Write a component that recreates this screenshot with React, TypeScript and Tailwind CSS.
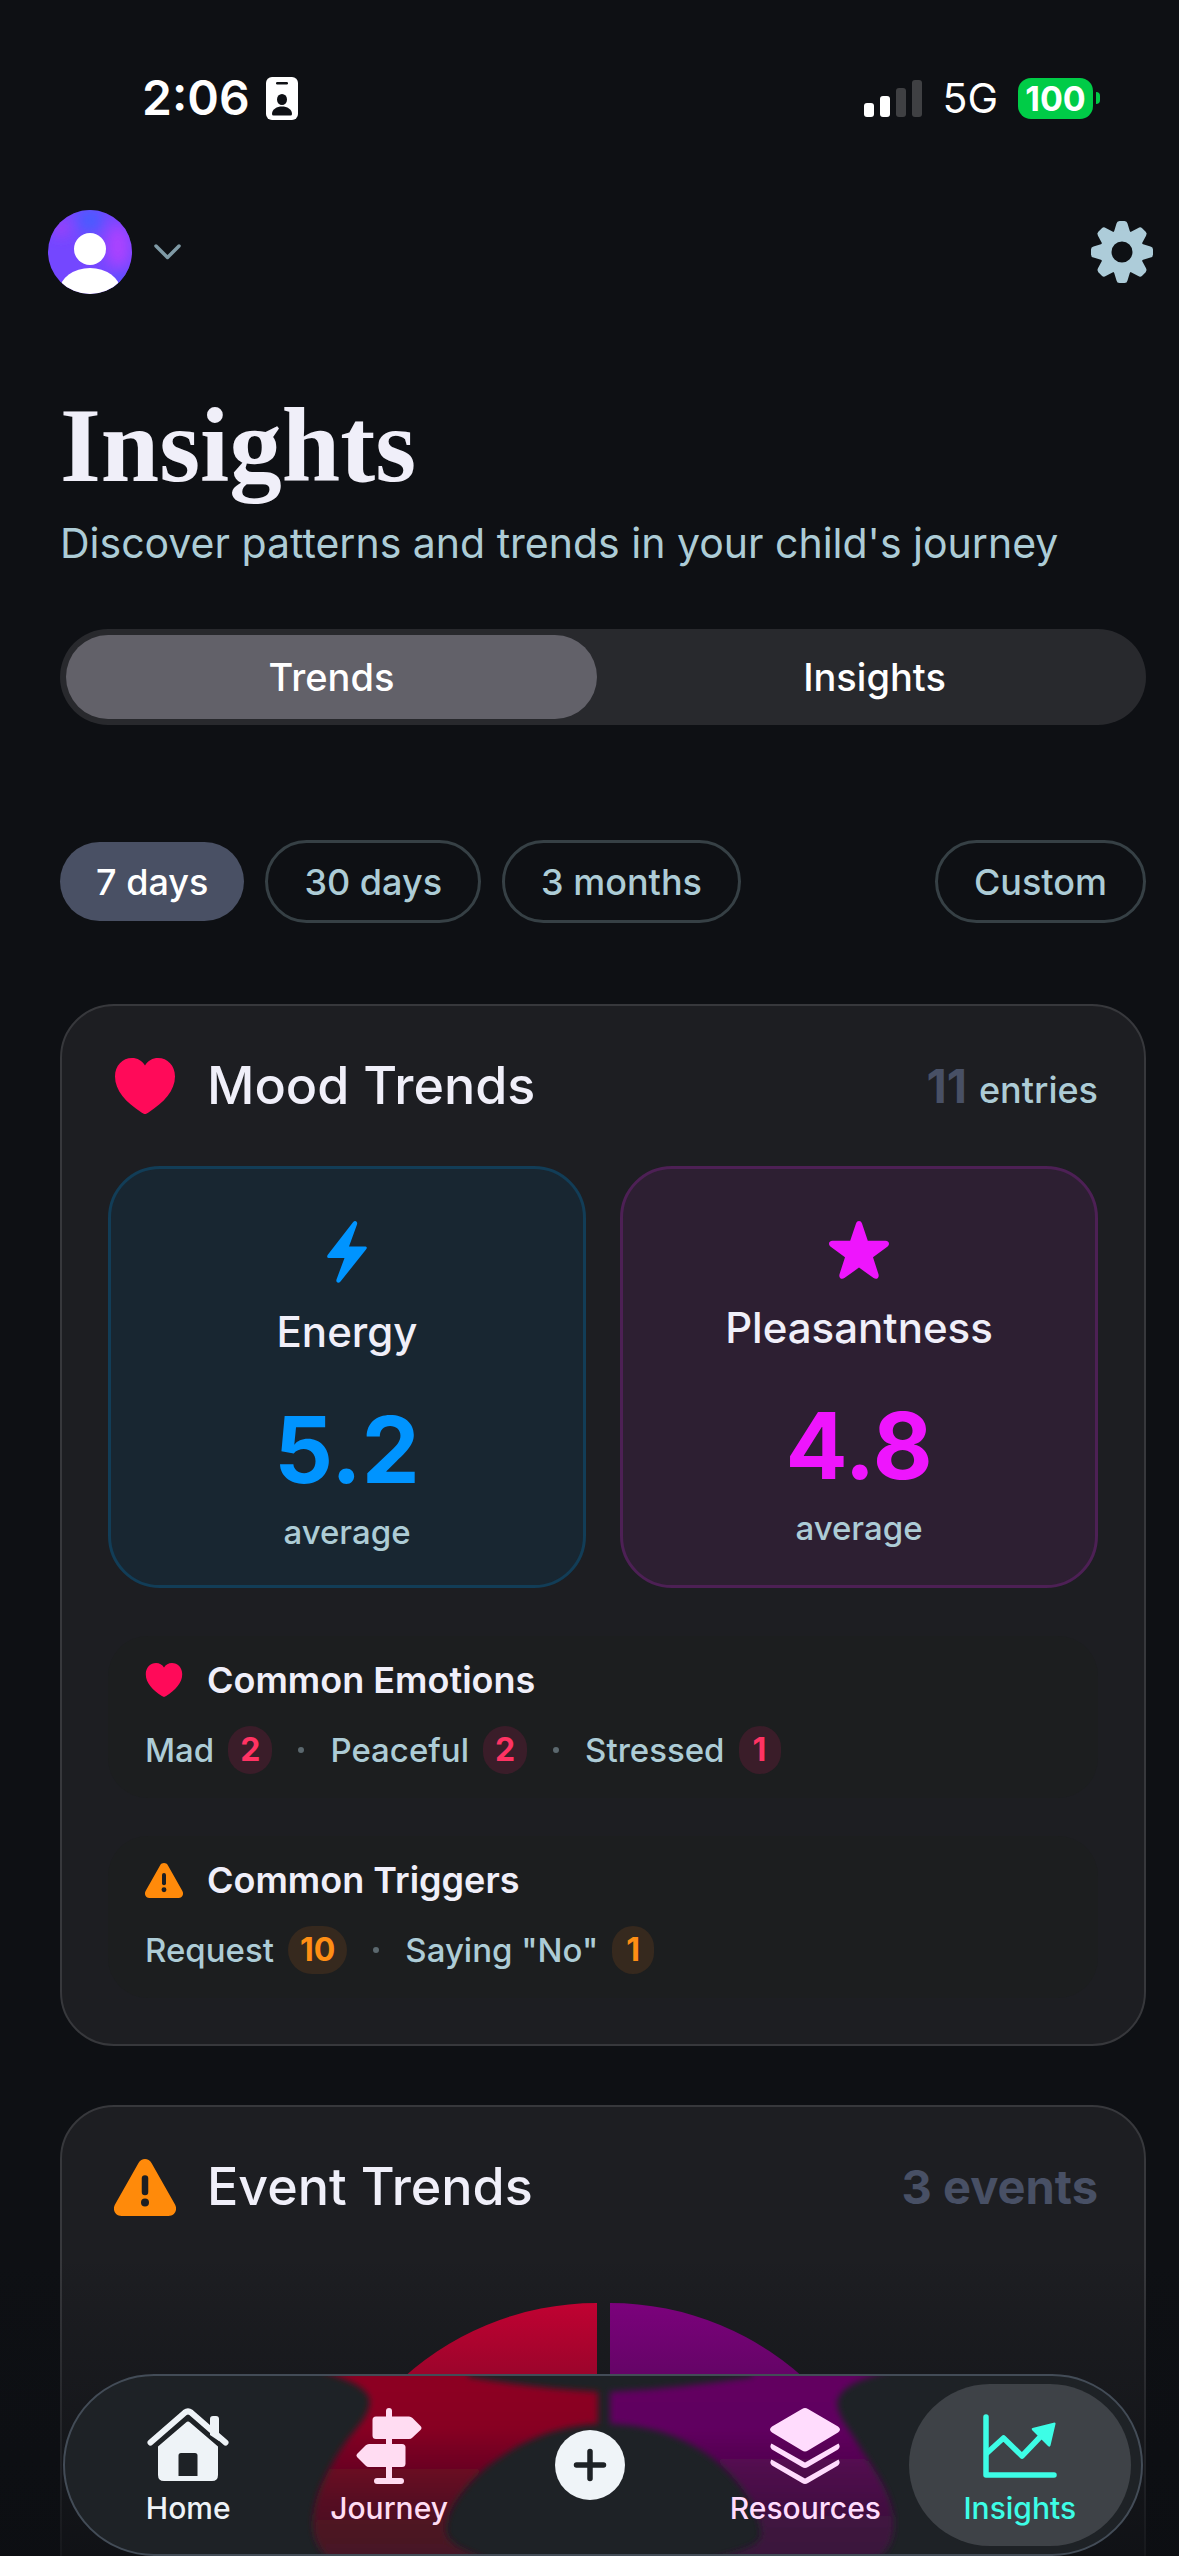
import React from 'react'
import clsx from 'clsx'

type IconProps = { className?: string }

const HeartIcon = ({ className }: IconProps) => (
  <svg viewBox="0 0 60 56" className={className} fill="currentColor" aria-hidden="true">
    <path d="M30 56C29 56 27.500 55 26.500 54.400C11 44.500 0 32.500 0 18.500C0 7.500 7.500 0 17 0C22.500 0 27 2.500 30 7.500C33 2.500 37.500 0 43 0C52.500 0 60 7.500 60 18.500C60 32.500 49 44.500 33.500 54.400C32.500 55 31 56 30 56Z" />
  </svg>
)

const WarningIcon = ({ className }: IconProps) => (
  <svg viewBox="0 0 62 57" className={className} aria-hidden="true">
    <path
      d="M24.500 4C27.300 -1.300 34.700 -1.300 37.500 4L61 45.500C64 51 60.500 57 54.500 57H7.500C1.500 57 -2 51 1 45.500Z"
      fill="currentColor"
    />
    <path d="M31 19.500V33" stroke="#1d1e22" strokeWidth="6.500" strokeLinecap="round" />
    <circle cx="31" cy="43.500" r="4" fill="#1d1e22" />
  </svg>
)

const BoltIcon = ({ className }: IconProps) => (
  <svg viewBox="0 0 40 62" className={className} fill="currentColor" aria-hidden="true">
    <path d="M26 1.200L1 33.500C-0.600 35.600 0.200 37 2.500 37H17.500L9.500 58.500C8.600 61.500 11.500 63 13.500 60.500L39 28.500C40.600 26.400 39.800 25.400 37.500 25.400H22L30 3.500C31 0.500 28 -1.300 26 1.200Z" />
  </svg>
)

const StarIcon = ({ className }: IconProps) => (
  <svg viewBox="0 0 60 58" className={className} fill="currentColor" aria-hidden="true">
    <path d="M27 2.500C28 -0.800 32 -0.800 33 2.500L38.800 19.700H56.500C60.200 19.700 61.200 23.500 58.300 25.700L44 36.300L49.500 53.300C50.500 56.800 47.500 59 44.600 57L30 46.600L15.400 57C12.500 59 9.500 56.800 10.500 53.300L16 36.300L1.700 25.700C-1.200 23.500 -0.200 19.700 3.500 19.700H21.200Z" />
  </svg>
)

const GearIcon = ({ className }: IconProps) => (
  <svg viewBox="0 0 62 62" className={className} aria-hidden="true">
    <g fill="currentColor">
      {[0, 45, 90, 135, 180, 225, 270, 315].map((angle) => (
        <path
          key={angle}
          d="M22 14L25.500 2.500Q26 0 28.500 0H33.500Q36 0 36.500 2.500L40 14Z"
          transform={`rotate(${angle} 31 31)`}
        />
      ))}
      <path fillRule="evenodd" d="M31 9a22 22 0 1 0 0 44a22 22 0 1 0 0-44ZM31 20.500a10.500 10.500 0 1 1 0 21a10.500 10.500 0 1 1 0-21Z" />
    </g>
  </svg>
)

const HomeIcon = ({ className }: IconProps) => (
  <svg viewBox="0 0 82 74" className={className} aria-hidden="true">
    <path d="M63 27V11Q63 8 66 8H69Q72 8 72 11V33Z" fill="currentColor" />
    <path d="M3.500 34.500L38 4.500Q41 2.200 44 4.500L78.500 34.500" fill="none" stroke="currentColor" strokeWidth="6" strokeLinecap="round" strokeLinejoin="round" />
    <path
      fillRule="evenodd"
      d="M39 14.500Q41 12.500 43 14.500L71 38.500V67Q71 73 65 73H17Q11 73 11 67V38.500ZM34 45Q31.500 45 31.500 47.500V68H50.500V47.500Q50.500 45 48 45Z"
      fill="currentColor"
    />
  </svg>
)

const SignpostIcon = ({ className }: IconProps) => (
  <svg viewBox="0 0 66 76" className={className} fill="currentColor" aria-hidden="true">
    <rect x="30" y="0" width="6" height="74" rx="3" />
    <rect x="18" y="70" width="30" height="6" rx="3" />
    <path d="M20 8.500H53Q55 8.500 56.500 10L64.500 18Q66.500 20 64.500 22L56.500 29.500Q55 31 53 31H20Q16.500 31 16.500 27.500V12Q16.500 8.500 20 8.500Z" />
    <path d="M46 36H13Q11 36 9.500 37.500L1.500 45.500Q-0.500 47.500 1.500 49.500L9.500 57.500Q11 59 13 59H46Q49.500 59 49.500 55.500V39.500Q49.500 36 46 36Z" />
  </svg>
)

const LayersIcon = ({ className }: IconProps) => (
  <svg viewBox="0 0 70 76" className={className} fill="currentColor" aria-hidden="true">
    <path d="M32 1Q35 -0.800 38 1L68 18.500Q72 21.500 68 24.500L38 42.500Q35 44.300 32 42.500L2 24.500Q-2 21.500 2 18.500Z" />
    <path d="M1.500 35.500L35 54.500L68.500 35.500Q71 39 68 41.500L38 59Q35 60.800 32 59L2 41.500Q-1 39 1.500 35.500Z" />
    <path d="M1.500 51.500L35 70.500L68.500 51.500Q71 55 68 57.500L38 75Q35 76.800 32 75L2 57.500Q-1 55 1.500 51.500Z" />
  </svg>
)

const ChartIcon = ({ className }: IconProps) => (
  <svg viewBox="0 0 74 64" className={className} aria-hidden="true">
    <g fill="none" stroke="currentColor" strokeWidth="5.500" strokeLinecap="round" strokeLinejoin="round">
      <path d="M3 3V61H71" />
      <path d="M4 39L20.500 24L39 42L60 20" />
    </g>
    <path d="M49.500 14L71.500 8.500Q73 8.500 72.500 10L67.500 31.500Q66.800 33.500 65 32L49 16Q48 14.500 49.500 14Z" fill="currentColor" />
  </svg>
)

const IdBadgeIcon = ({ className }: IconProps) => (
  <svg viewBox="0 0 32 43" className={className} aria-hidden="true">
    <rect width="32" height="43" rx="6" fill="#fff" />
    <g fill="#0e1014">
      <rect x="10" y="5" width="12" height="2.500" rx="1.200" />
      <ellipse cx="16" cy="22.500" rx="5" ry="5.500" />
      <path d="M6 37C6 32 11 29.500 16 29.500S26 32 26 37Q26 38.500 24.500 38.500H7.500Q6 38.500 6 37Z" />
    </g>
  </svg>
)

function StatusBar() {
  return (
    <div className="flex items-center justify-between pt-[76px] pl-[142px] pr-[79px] text-white">
      <div className="flex items-center gap-4">
        <span className="text-[48px] leading-[44px] font-semibold">2:06</span>
        <IdBadgeIcon className="h-[43px] w-8" />
      </div>
      <div className="flex items-center">
        <div className="mr-5 flex h-[37px] items-end gap-1.5">
          <span className="h-3.5 w-2.5 rounded-[3px] bg-white" />
          <span className="h-[21px] w-2.5 rounded-[3px] bg-white" />
          <span className="h-[29px] w-2.5 rounded-[3px] bg-[#3f4043]" />
          <span className="h-[37px] w-2.5 rounded-[3px] bg-[#3f4043]" />
        </div>
        <span className="mr-5 text-[41px] leading-[44px]">5G</span>
        <span className="flex h-[41px] w-[75px] items-center justify-center rounded-[13px] bg-[#00cc47] text-[34px] font-bold">
          100
        </span>
        <span className="ml-[3px] h-3 w-1 rounded-r-full bg-[#00cc47]" />
      </div>
    </div>
  )
}

function Header() {
  return (
    <header className="mt-[90px] flex items-center justify-between pl-12 pr-[26px]">
      <button type="button" aria-label="Switch profile" className="flex items-center gap-[22px]">
        <svg viewBox="0 0 84 84" className="size-[84px]" aria-hidden="true">
          <defs>
            <clipPath id="avatar">
              <circle cx="42" cy="42" r="42" />
            </clipPath>
            <filter id="soft" x="-50%" y="-50%" width="200%" height="200%">
              <feGaussianBlur stdDeviation="7" />
            </filter>
          </defs>
          <g clipPath="url(#avatar)">
            <rect width="84" height="84" fill="#7447ff" />
            <g filter="url(#soft)">
              <circle cx="13" cy="18" r="8" fill="#a63ff8" />
              <ellipse cx="42" cy="10" rx="13" ry="13" fill="#4a5cff" />
              <ellipse cx="70" cy="36" rx="12" ry="22" fill="#ac42ff" />
              <circle cx="74" cy="72" r="12" fill="#5a50ff" />
            </g>
            <circle cx="42" cy="39" r="16" fill="#fff" />
            <ellipse cx="42" cy="80" rx="30" ry="22" fill="#fff" />
          </g>
        </svg>
        <svg viewBox="0 0 27 16" className="h-4 w-[27px]" fill="none" stroke="#7f9aa6" strokeWidth="3.500" strokeLinecap="round" strokeLinejoin="round" aria-hidden="true">
          <path d="M2 2L13.500 13.500L25 2" />
        </svg>
      </button>
      <button type="button" aria-label="Settings" className="text-[#adccd9]">
        <GearIcon className="size-[62px]" />
      </button>
    </header>
  )
}

function SegmentedControl() {
  const [active, setActive] = React.useState('Trends')
  return (
    <div className="mt-[58px] grid grid-cols-2 gap-3 rounded-full bg-[#28292d] p-1.5">
      {['Trends', 'Insights'].map((tab) => (
        <button
          key={tab}
          type="button"
          onClick={() => setActive(tab)}
          className={clsx(
            'h-[84px] rounded-full text-[38px] font-medium text-white',
            active === tab && 'bg-[#626169]'
          )}
        >
          {tab}
        </button>
      ))}
    </div>
  )
}

function RangeFilter() {
  const [range, setRange] = React.useState('7 days')
  const chip = (label: string) => (
    <button
      key={label}
      type="button"
      onClick={() => setRange(label)}
      className={clsx(
        'rounded-full px-9 text-[36px] font-medium',
        range === label ? 'h-[79px] bg-[#495064] text-white' : 'h-[83px] border-3 border-[#364045] text-[#adccd6]'
      )}
    >
      {label}
    </button>
  )
  return (
    <div className="mt-[115px] flex items-center justify-between">
      <div className="flex items-center gap-[21px]">{['7 days', '30 days', '3 months'].map(chip)}</div>
      {chip('Custom')}
    </div>
  )
}

type StatProps = {
  label: string
  value: string
  icon: React.ReactNode
  boxClass: string
  colorClass: string
}

function StatCard({ label, value, icon, boxClass, colorClass }: StatProps) {
  return (
    <div className={clsx('flex h-[422px] flex-col items-center rounded-[52px] border-3 pt-[52px]', boxClass)}>
      <div className={colorClass}>{icon}</div>
      <h3 className="mt-[23px] text-[42px] leading-[52px] font-medium text-[#f0eff9]">{label}</h3>
      <p className={clsx('mt-11 text-[92px] leading-[96px] font-bold', colorClass)}>{value}</p>
      <p className="mt-3 text-[33px] leading-[44px] font-medium text-[#adccd6]">average</p>
    </div>
  )
}

type Item = { name: string; count: number }

function CommonPanel({ title, icon, items, badgeClass }: { title: string; icon: React.ReactNode; items: Item[]; badgeClass: string }) {
  return (
    <section className="rounded-[40px] bg-[#1c1e1f] px-[37px] py-6">
      <div className="flex items-center gap-6">
        {icon}
        <h3 className="text-[36px] leading-10 font-semibold text-[#f0eff9]">{title}</h3>
      </div>
      <ul className="mt-[26px] flex items-center">
        {items.map((item, i) => (
          <li key={item.name} className="flex items-center">
            {i > 0 && <span className="mx-[26px] size-1.5 rounded-full bg-[#5b686e]" />}
            <span className="text-[33px] leading-[48px] font-medium text-[#adccd6]">{item.name}</span>
            <span className={clsx('ml-3.5 flex h-12 min-w-[42px] items-center justify-center rounded-full px-3 text-[32px] font-bold', badgeClass)}>
              {item.count}
            </span>
          </li>
        ))}
      </ul>
    </section>
  )
}

function MoodTrends() {
  return (
    <section className="mt-[81px] rounded-[54px] border-2 border-[#37383c] bg-[#1d1e22] px-[46px] pt-12 pb-[46px]">
      <div className="flex h-16 items-center justify-between">
        <div className="flex items-center gap-[25px]">
          <span className="flex w-[74px] justify-center text-[#ff0a59]">
            <HeartIcon className="h-14 w-[60px]" />
          </span>
          <h2 className="text-[52px] leading-[64px] font-medium text-[#f0eff9]">Mood Trends</h2>
        </div>
        <p className="flex items-baseline gap-3 text-[36px] font-medium text-[#adccd6]">
          <span className="text-[47px] font-bold text-[#485065]">11</span>
          <span>entries</span>
        </p>
      </div>

      <div className="mt-12 grid grid-cols-2 gap-[34px]">
        <StatCard
          label="Energy"
          value="5.2"
          icon={<BoltIcon className="h-[62px] w-10" />}
          boxClass="border-[#123d57] bg-[#182631]"
          colorClass="text-[#0094ff]"
        />
        <StatCard
          label="Pleasantness"
          value="4.8"
          icon={<StarIcon className="h-[58px] w-[60px]" />}
          boxClass="border-[#4d2055] bg-[#2d1f32]"
          colorClass="text-[#ee15fd]"
        />
      </div>

      <div className="mt-12 flex flex-col gap-[38px]">
        <CommonPanel
          title="Common Emotions"
          icon={<HeartIcon className="h-[34px] w-[38px] text-[#ff0a59]" />}
          items={[
            { name: 'Mad', count: 2 },
            { name: 'Peaceful', count: 2 },
            { name: 'Stressed', count: 1 },
          ]}
          badgeClass="bg-[#3a1d29] text-[#ff3363]"
        />
        <CommonPanel
          title="Common Triggers"
          icon={<WarningIcon className="h-[35px] w-[38px] text-[#ff8a0a]" />}
          items={[
            { name: 'Request', count: 10 },
            { name: 'Saying "No"', count: 1 },
          ]}
          badgeClass="bg-[#36291e] text-[#ff8e14]"
        />
      </div>
    </section>
  )
}

function EventTrends() {
  return (
    <section className="mt-[59px] rounded-[54px] border-2 border-[#37383c] bg-[#1d1e22] px-[46px] pt-12 pb-[46px]">
      <div className="flex h-16 items-center justify-between">
        <div className="flex items-center gap-[25px]">
          <span className="flex w-[74px] justify-center text-[#ff8a0a]">
            <WarningIcon className="h-[57px] w-[62px]" />
          </span>
          <h2 className="text-[52px] leading-[64px] font-medium text-[#f0eff9]">Event Trends</h2>
        </div>
        <p className="text-[47px] font-bold text-[#485065]">3 events</p>
      </div>
      <svg viewBox="0 0 590 576" className="mx-auto mt-[84px] w-[590px]" aria-hidden="true">
        <path d="M289 0A288 288 0 0 0 289 576V408A120 120 0 0 1 289 168Z" fill="#d80036" />
        <path d="M302 0A288 288 0 0 1 302 576V408A120 120 0 0 0 302 168Z" fill="#8a008a" />
      </svg>
    </section>
  )
}

function BottomNav() {
  const item = 'flex h-[162px] flex-col items-center justify-between pt-6 pb-[18px] text-[30px] leading-10 font-medium'
  return (
    <nav className="absolute inset-x-0 bottom-0 pl-[63px] pr-9">
      <div className="relative grid h-[182px] grid-cols-[222fr_179fr_223fr_206fr_222fr] items-center overflow-hidden rounded-full border-2 border-[#434c57] bg-[#1e2226] pr-2.5 pl-3">
        {/* chart colours bent through the glass */}
        <svg viewBox="0 0 1080 182" preserveAspectRatio="none" className="absolute inset-0 h-full w-full" aria-hidden="true">
          <defs>
            <linearGradient id="glassRed" x1="0" y1="0" x2="0" y2="1">
              <stop offset="0.1" stopColor="#8c0022" />
              <stop offset="0.3" stopColor="#880022" />
              <stop offset="0.5" stopColor="#6c0624" />
              <stop offset="0.7" stopColor="#541024" />
              <stop offset="1" stopColor="#441625" />
            </linearGradient>
            <linearGradient id="glassPurple" x1="0" y1="0" x2="0" y2="1">
              <stop offset="0.1" stopColor="#620060" />
              <stop offset="0.3" stopColor="#610060" />
              <stop offset="0.5" stopColor="#52084f" />
              <stop offset="0.7" stopColor="#431042" />
              <stop offset="1" stopColor="#38183a" />
            </linearGradient>
            <filter id="glassBlur" x="-10%" y="-10%" width="120%" height="120%">
              <feGaussianBlur stdDeviation="3" />
            </filter>
          </defs>
          <g filter="url(#glassBlur)">
            <path
              d="M255 -6C285 4 307 12 306 28C304 42 292 54 283 66C268 88 249 120 249 150C249 166 254 178 268 190H430C400 178 382 172 382 156C384 128 416 96 440 81C470 60 505 50 535 49V16C505 15 450 9 405 1V-6Z"
              fill="url(#glassRed)"
            />
            <path
              d="M830 -6C795 4 775 12 775 30C778 46 790 58 796 70C814 98 832 124 832 150C832 166 828 178 812 190H640C680 178 700 174 699 160C696 132 672 98 640 77C612 58 580 50 547 49V16C580 15 640 9 690 1V-6Z"
              fill="url(#glassPurple)"
            />
          </g>
        </svg>
        <a href="#home" className={clsx(item, 'relative text-[#eef3f7]')}>
          <HomeIcon className="h-[74px] w-[82px]" />
          Home
        </a>
        <a href="#journey" className={clsx(item, 'relative text-[#ffdcf2]')}>
          <SignpostIcon className="h-[76px] w-[66px]" />
          Journey
        </a>
        <button type="button" aria-label="Add entry" className="relative mx-auto flex size-[70px] items-center justify-center rounded-full bg-[#eff4f8]">
          <svg viewBox="0 0 34 34" className="size-[34px]" stroke="#1e2226" strokeWidth="5.500" strokeLinecap="round" aria-hidden="true">
            <path d="M17 3.500V30.500M3.500 17H30.500" />
          </svg>
        </button>
        <a href="#resources" className={clsx(item, 'relative text-[#ffdcfd]')}>
          <LayersIcon className="h-[76px] w-[70px]" />
          Resources
        </a>
        <a href="#insights" className={clsx(item, 'relative rounded-full bg-[#3e4247] text-[#3dfde6]')}>
          <span className="flex h-[76px] items-center">
            <ChartIcon className="h-16 w-[74px]" />
          </span>
          Insights
        </a>
      </div>
    </nav>
  )
}

export default function App() {
  return (
    <div className="relative h-screen overflow-hidden bg-[#0e1014] font-[Inter,sans-serif]">
      <div className="h-full overflow-y-auto pb-60 [scrollbar-width:none]">
        <StatusBar />
        <Header />
        <main className="pt-[100px] pl-[60px] pr-[33px]">
          <h1 className="font-['Liberation_Serif',serif] text-[105px] leading-[104px] font-bold text-[#f0eff9]">Insights</h1>
          <p className="mt-[17px] text-[41px] leading-[56px] text-[#adccd6]">
            Discover patterns and trends in your child's journey
          </p>
          <SegmentedControl />
          <RangeFilter />
          <MoodTrends />
          <EventTrends />
        </main>
      </div>
      <div className="pointer-events-none absolute inset-x-0 bottom-0 h-[300px] bg-linear-to-b from-[#0c0e12]/0 to-[#0c0e12]/75" />
      <BottomNav />
    </div>
  )
}
